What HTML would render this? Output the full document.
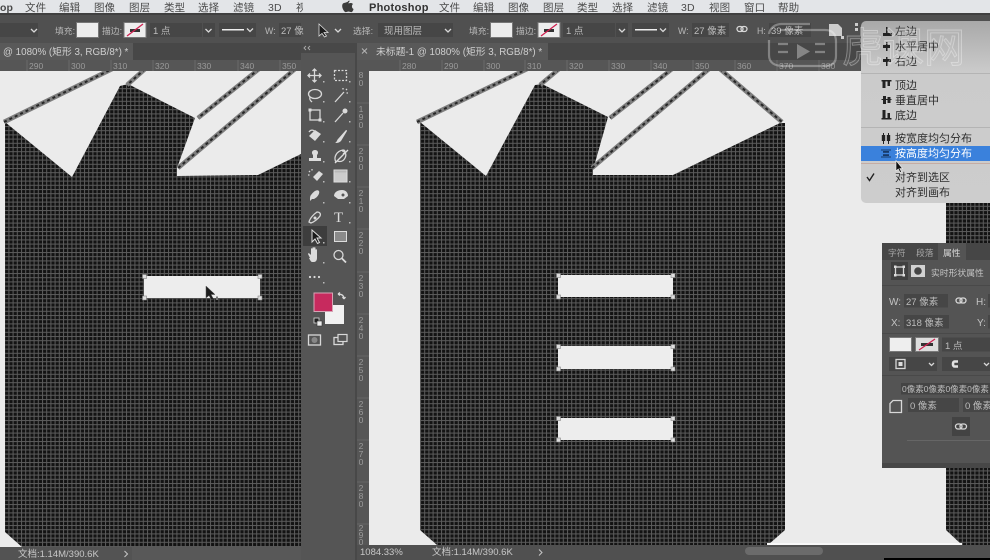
<!DOCTYPE html>
<html lang="zh"><head><meta charset="utf-8"><title>Photoshop</title>
<style>
html,body{margin:0;padding:0;background:#535353;width:990px;height:560px;overflow:hidden}
svg{display:block;filter:blur(.3px)}
text{font-family:"Liberation Sans","Noto Sans CJK SC",sans-serif}
.m{font-size:10.5px;fill:#4a4a4a;letter-spacing:.1px}
.o{font-size:8.800px;fill:#b8b8b8}
.v{font-size:9.500px;fill:#bdbdbd}
.t{font-size:9.800px;fill:#cfcfcf}
.r{font-size:8.5px;fill:#9a9a9a}
.s{font-size:9.5px;fill:#c8c8c8}
.d{font-size:11px;fill:#2e2e2e}
.p{font-size:8.800px;fill:#c4c4c4}
.box{fill:#464646}
.ic{fill:none;stroke:#d8d8d8;stroke-width:1.3}
.if{fill:#dcdcdc}
.ln{fill:none;stroke:#7e7e7e;stroke-width:4.6}
.ld{fill:none;stroke:#262626;stroke-width:2;stroke-dasharray:3 3}
</style></head><body>
<svg width="990" height="560" viewBox="0 0 990 560" xmlns="http://www.w3.org/2000/svg">
<defs>
<pattern id="g" patternUnits="userSpaceOnUse" width="4.2" height="4.2">
<rect width="4.2" height="4.2" fill="#131313"/>
<rect width="1" height="4.2" fill="#5c5c5c"/>
<rect width="4.2" height="1" fill="#5c5c5c"/>
</pattern>
<linearGradient id="mg" x1="0" y1="0" x2="0" y2="1"><stop offset="0" stop-color="#a9a9a9"/><stop offset=".28" stop-color="#cbcbcb"/><stop offset="1" stop-color="#cdcdcd"/></linearGradient>
</defs>

<rect width="990" height="560" fill="#535353"/>

<!-- left canvas -->
<rect x="0" y="71" width="301" height="476" fill="#ebebeb"/>
<polygon fill="url(#g)" points="5,122 72,177 120,86 128,84 195,118 177,168 177,176 258,175 301,154 301,547 22,547 5,532"/>
<g>
<path class="ln" d="M4,122L112,69M145,69L127,85M259,69L198,118M295,69L178,168"/>
<path class="ld" d="M4,122L112,69M145,69L127,85M259,69L198,118M295,69L178,168"/>
</g>
<rect x="144" y="276" width="116" height="22" fill="#ededed"/>
<g fill="#ddd" stroke="#888" stroke-width=".6">
<rect x="142.500" y="274.500" width="4" height="4"/><rect x="258" y="274.500" width="4" height="4"/><rect x="142.500" y="296" width="4" height="4"/><rect x="258" y="296" width="4" height="4"/>
</g>
<path d="M206,286V298L209,295.500L211.500,300L213.500,299L211,294.500H215Z" fill="#1c1c1c" stroke="#555" stroke-width=".5"/>
<path d="M217,296.500V300" stroke="#777" stroke-width="2"/>

<!-- right canvas -->
<rect x="369" y="71" width="621" height="474" fill="#ebebeb"/>
<polygon fill="url(#g)" points="420,122 486,176 535,85 542,84 608,117 593,170 593,175 673,175 780,123 785,123 785,530 768,545 437,545 420,530"/>
<polygon fill="url(#g)" points="946,195 990,195 990,545 962,545 946,530"/>
<rect x="767" y="543" width="195" height="2" fill="#f8f8f8"/>
<g>
<path class="ln" d="M417,122L527,69M559,69L540,85M672,69L610,118M709,69L592,168M720,69L782,122"/>
<path class="ld" d="M417,122L527,69M559,69L540,85M672,69L610,118M709,69L592,168M720,69L782,122"/>
</g>
<g fill="#ededed">
<rect x="558" y="275" width="115" height="22"/><rect x="558" y="346" width="115" height="23"/><rect x="558" y="418" width="115" height="22"/>
</g>
<g fill="#ddd" stroke="#888" stroke-width=".6">
<rect x="556.500" y="273.500" width="4" height="4"/><rect x="671" y="273.500" width="4" height="4"/><rect x="556.500" y="295" width="4" height="4"/><rect x="671" y="295" width="4" height="4"/>
<rect x="556.500" y="344.500" width="4" height="4"/><rect x="671" y="344.500" width="4" height="4"/><rect x="556.500" y="367" width="4" height="4"/><rect x="671" y="367" width="4" height="4"/>
<rect x="556.500" y="416.500" width="4" height="4"/><rect x="671" y="416.500" width="4" height="4"/><rect x="556.500" y="438" width="4" height="4"/><rect x="671" y="438" width="4" height="4"/>
</g>

<!-- menu bar -->
<rect width="990" height="13" fill="#e3e5e8"/>
<g class="m">
<text x="0" y="11" class="m" style="font-weight:700">op</text>
<text x="25" y="11" class="m">文件</text><text x="59" y="11" class="m">编辑</text><text x="94" y="11" class="m">图像</text><text x="129" y="11" class="m">图层</text><text x="164" y="11" class="m">类型</text><text x="198" y="11" class="m">选择</text><text x="233" y="11" class="m">滤镜</text><text x="268" y="11" class="m">3D</text><text x="296" y="11" class="m">视</text>
<text x="369" y="11" class="m" style="font-weight:700;font-size:11px;fill:#333;letter-spacing:.25px">Photoshop</text>
<text x="439" y="11" class="m">文件</text><text x="473" y="11" class="m">编辑</text><text x="508" y="11" class="m">图像</text><text x="543" y="11" class="m">图层</text><text x="577" y="11" class="m">类型</text><text x="612" y="11" class="m">选择</text><text x="647" y="11" class="m">滤镜</text><text x="681" y="11" class="m">3D</text><text x="709" y="11" class="m">视图</text><text x="744" y="11" class="m">窗口</text><text x="778" y="11" class="m">帮助</text>
</g>
<rect x="303" y="0" width="38" height="13" fill="#e3e5e8"/>
<path d="M348,1.500C346,3 344,2.500 343,3.500C341.500,5 342,9 345,12C346.500,12.500 347,11.500 348.500,11.500C350,11.500 350.500,12.500 352,12C353,11 353.500,9.500 353.500,9C351.500,8 351.500,5 353,4C352,2.800 350,2.700 348.500,3.500C348.500,2.500 349,1.500 350,1C349,.5 348,1 348,1.500Z" fill="#3c3c3c"/>

<!-- options bar -->
<rect y="13" width="990" height="30" fill="#505050"/>
<rect y="13" width="990" height="2" fill="#404040"/>
<rect x="0" y="23" width="38" height="14" class="box"/>
<path d="M31,29l3,3l3,-3" class="ic" stroke-width="1"/>
<text x="55" y="34" class="o">填充:</text>
<rect x="76.500" y="22.500" width="22" height="15" fill="#ededed" stroke="#777"/>
<text x="102" y="34" class="o">描边:</text>
<rect x="124" y="22.500" width="22" height="15" fill="#ededed" stroke="#777"/>
<rect x="130" y="29" width="10" height="3" fill="#333"/><path d="M127,36L143,24" stroke="#d02050" stroke-width="1.300"/>
<rect x="150" y="23" width="52" height="14" class="box"/><text x="153" y="34" class="v">1 点</text>
<rect x="203" y="23" width="12" height="14" class="box"/><path d="M205.500,29l3,3l3,-3" class="ic" stroke-width="1"/>
<rect x="219" y="23" width="37" height="14" class="box"/><rect x="222" y="29" width="22" height="1.500" fill="#eee"/><path d="M247,28.500l3,3l3,-3" class="ic" stroke-width="1"/>
<text x="265" y="34" class="o">W:</text>
<rect x="279" y="23" width="22" height="14" class="box"/><text x="281" y="34" class="v">27 像</text>
<path d="M319,24V36L322,33.500L324.500,37L326.500,36L324,32.500H328Z" fill="#1e1e1e" stroke="#ddd" stroke-width=".8"/>
<path d="M335,29l3,3l3,-3" class="ic" stroke-width="1"/>
<text x="353" y="34" class="o">选择:</text>
<rect x="378" y="23" width="75" height="14" class="box"/><text x="384" y="34" class="v">现用图层</text><path d="M445,29l3,3l3,-3" class="ic" stroke-width="1"/>
<text x="469" y="34" class="o">填充:</text>
<rect x="490.500" y="22.500" width="22" height="15" fill="#ededed" stroke="#777"/>
<text x="516" y="34" class="o">描边:</text>
<rect x="538" y="22.500" width="22" height="15" fill="#ededed" stroke="#777"/>
<rect x="544" y="29" width="10" height="3" fill="#333"/><path d="M541,36L557,24" stroke="#d02050" stroke-width="1.300"/>
<rect x="563" y="23" width="52" height="14" class="box"/><text x="566" y="34" class="v">1 点</text>
<rect x="616" y="23" width="12" height="14" class="box"/><path d="M619,29l3,3l3,-3" class="ic" stroke-width="1"/>
<rect x="632" y="23" width="37" height="14" class="box"/><rect x="635" y="29" width="22" height="1.500" fill="#eee"/><path d="M660,28.500l3,3l3,-3" class="ic" stroke-width="1"/>
<text x="678" y="34" class="o">W:</text>
<rect x="692" y="23" width="37" height="14" class="box"/><text x="694" y="34" class="v">27 像素</text>
<rect x="737" y="26.500" width="6" height="5" rx="2.500" class="ic" stroke-width="1"/><rect x="741" y="26.500" width="6" height="5" rx="2.500" class="ic" stroke-width="1"/>
<text x="757" y="34" class="o">H:</text>
<rect x="769" y="23" width="42" height="14" class="box"/><text x="771" y="34" class="v">39 像素</text>
<path d="M829,24H838L842,28V36H829Z" fill="#ccc"/>
<g fill="#ccc"><rect x="855" y="23" width="3" height="3"/><rect x="855" y="28" width="3" height="3"/><rect x="841" y="36" width="3" height="3"/></g>

<!-- tab bars -->
<rect y="43" width="990" height="17" fill="#474747"/>
<rect x="0" y="43" width="133" height="17" fill="#595959"/>
<text x="3" y="55" class="t">@ 1080% (矩形 3, RGB/8*) *</text>
<rect x="357" y="43" width="191" height="17" fill="#595959"/>
<path d="M362,48.500l5,5M367,48.500l-5,5" stroke="#b5b5b5" stroke-width="1"/>
<text x="376" y="55" class="t">未标题-1 @ 1080% (矩形 3, RGB/8*) *</text>

<!-- horizontal rulers -->
<rect y="60" width="990" height="11" fill="#565656"/>
<g stroke="#6e6e6e" stroke-width=".8">
<path d="M27,60v11M69,60v11M111,60v11M153,60v11M195,60v11M238,60v11M280,60v11M400,60v11M442,60v11M484,60v11M525,60v11M567,60v11M609,60v11M651,60v11M693,60v11M735,60v11M777,60v11M819,60v11"/>
</g>
<g class="r">
<text x="29" y="69" class="r">290</text><text x="71" y="69" class="r">300</text><text x="113" y="69" class="r">310</text><text x="155" y="69" class="r">320</text><text x="197" y="69" class="r">330</text><text x="240" y="69" class="r">340</text><text x="282" y="69" class="r">350</text>
<text x="402" y="69" class="r">280</text><text x="444" y="69" class="r">290</text><text x="486" y="69" class="r">300</text><text x="527" y="69" class="r">310</text><text x="569" y="69" class="r">320</text><text x="611" y="69" class="r">330</text><text x="653" y="69" class="r">340</text><text x="695" y="69" class="r">350</text><text x="737" y="69" class="r">360</text><text x="779" y="69" class="r">370</text><text x="821" y="69" class="r">380</text>
</g>

<!-- vertical ruler -->
<rect x="357" y="60" width="12" height="487" fill="#565656"/>
<g stroke="#6e6e6e" stroke-width=".8"><path d="M357,103h12M357,145h12M357,187h12M357,229h12M357,272h12M357,314h12M357,356h12M357,398h12M357,440h12M357,482h12M357,524h12"/></g>
<g class="r" text-anchor="middle">
<text x="361" y="78" class="r" text-anchor="middle">8</text><text x="361" y="86" class="r" text-anchor="middle">0</text>
<text x="361" y="112" class="r" text-anchor="middle">1</text><text x="361" y="120" class="r" text-anchor="middle">9</text><text x="361" y="128" class="r" text-anchor="middle">0</text>
<text x="361" y="154" class="r" text-anchor="middle">2</text><text x="361" y="162" class="r" text-anchor="middle">0</text><text x="361" y="170" class="r" text-anchor="middle">0</text>
<text x="361" y="196" class="r" text-anchor="middle">2</text><text x="361" y="204" class="r" text-anchor="middle">1</text><text x="361" y="212" class="r" text-anchor="middle">0</text>
<text x="361" y="238" class="r" text-anchor="middle">2</text><text x="361" y="246" class="r" text-anchor="middle">2</text><text x="361" y="254" class="r" text-anchor="middle">0</text>
<text x="361" y="281" class="r" text-anchor="middle">2</text><text x="361" y="289" class="r" text-anchor="middle">3</text><text x="361" y="297" class="r" text-anchor="middle">0</text>
<text x="361" y="323" class="r" text-anchor="middle">2</text><text x="361" y="331" class="r" text-anchor="middle">4</text><text x="361" y="339" class="r" text-anchor="middle">0</text>
<text x="361" y="365" class="r" text-anchor="middle">2</text><text x="361" y="373" class="r" text-anchor="middle">5</text><text x="361" y="381" class="r" text-anchor="middle">0</text>
<text x="361" y="407" class="r" text-anchor="middle">2</text><text x="361" y="415" class="r" text-anchor="middle">6</text><text x="361" y="423" class="r" text-anchor="middle">0</text>
<text x="361" y="449" class="r" text-anchor="middle">2</text><text x="361" y="457" class="r" text-anchor="middle">7</text><text x="361" y="465" class="r" text-anchor="middle">0</text>
<text x="361" y="491" class="r" text-anchor="middle">2</text><text x="361" y="499" class="r" text-anchor="middle">8</text><text x="361" y="507" class="r" text-anchor="middle">0</text>
<text x="361" y="531" class="r" text-anchor="middle">2</text><text x="361" y="538" class="r" text-anchor="middle">9</text><text x="361" y="545" class="r" text-anchor="middle">0</text>
</g>

<!-- toolbar -->
<rect x="301" y="43" width="56" height="517" fill="#484848"/>
<rect x="301" y="53" width="54" height="507" fill="#555"/>
<path d="M306,46l-2,2l2,2M310,46l-2,2l2,2" fill="none" stroke="#aaa" stroke-width=".9"/>
<rect x="303" y="226" width="24" height="20" fill="#3d3d3d"/>
<!-- row 1 -->
<path class="ic" d="M314.500,69v13M308,75.500h13M312.500,71l2,-2l2,2M312.500,80l2,2l2,-2M310,73.500l-2,2l2,2M319,73.500l2,2l-2,2"/>
<rect x="334.500" y="70.500" width="12" height="10" class="ic" stroke-dasharray="2 1.500"/>
<!-- row 2 -->
<ellipse cx="315" cy="94" rx="6.500" ry="4.500" class="ic"/><path class="ic" d="M310,97c-1,3 1,4 2,5"/>
<path class="ic" d="M335,102L344,92" stroke-width="2.400"/><path class="ic" d="M346,89l1,1M343,88v1.500M348,93h-1.500" stroke-width="1"/>
<!-- row 3 -->
<rect x="310" y="110" width="10" height="10" class="ic"/><rect x="308.500" y="108.500" width="3" height="3" class="if"/><rect x="318.500" y="118.500" width="3" height="3" class="if"/>
<path class="ic" d="M335,122L343,113" stroke-width="2.200"/><circle cx="345" cy="111" r="2.500" class="if"/>
<!-- row 4 -->
<path d="M309,136l6,-6l6,4l-6,7z" class="if"/><path d="M309,132c2,-3 5,-2 6,0" class="ic"/>
<path d="M335,143c2,-1 2,-3 3,-4l8,-9c1,0 1,1 1,1l-6,10c-2,2 -4,2 -6,2z" class="if"/>
<!-- row 5 -->
<path d="M309,161h12v-3h-4v-3c2,-2 1,-5 -2,-5s-4,3 -2,5v3h-4z" class="if"/>
<path class="ic" d="M336,162c-3,-5 1,-11 7,-12c3,0 2,3 0,4M342,151c3,0 5,3 3,7c-2,4 -5,4 -8,3"/><path d="M335,163L348,150" stroke="#ddd" stroke-width="1.300"/>
<!-- row 6 -->
<path d="M313,177l6,-6l4,3l-6,7z" class="if"/><path class="ic" d="M309,171l1,1M312,169v1.500M308,175h1.500" stroke-width="1"/>
<rect x="334" y="170" width="13" height="12" fill="url(#mg)" stroke="#ddd" stroke-width="1"/>
<!-- row 7 -->
<path d="M310,201c0,-3 0,-5 1,-6c3,-4 6,-6 8,-4c1,2 -1,6 -5,8l-2,0z" class="if"/>
<path d="M334,196c0,-4 4,-6 8,-6s6,3 6,6l-4,3h-6z" class="if"/><circle cx="343" cy="195" r="1.500" fill="#555"/>
<!-- row 8 -->
<path class="ic" d="M309,222c1,-4 5,-8 8,-10c3,0 4,2 3,4c-2,3 -6,6 -9,7z"/><circle cx="315" cy="218" r="1.500" class="if"/>
<text x="334" y="222" style="font-family:'Liberation Serif',serif;font-size:15px;fill:#dcdcdc">T</text>
<!-- row 9 -->
<path d="M312,230V242L315,239L317.500,243.500L319.500,242.500L317,238H321Z" fill="#1a1a1a" stroke="#ddd" stroke-width="1"/>
<rect x="334.500" y="231.500" width="12" height="10" fill="#8a8a8a" stroke="#ddd"/>
<!-- row 10 -->
<path d="M310,258l-2,-4c0,-1 1,-1 2,0l1,1v-6c0,-1 1.500,-1 1.500,0v4v-5c0,-1 1.500,-1 1.500,0v5v-5c0,-1 1.500,-1 1.500,0v5v-3c0,-1 1.500,-1 1.500,0v8c0,2 -1,4 -3,4h-2c-1,0 -2,-2 -3,-4z" class="if"/>
<circle cx="338.500" cy="255" r="4.500" class="ic"/><path d="M342,258.500l4,4" stroke="#ddd" stroke-width="1.800"/>
<!-- row 11 -->
<circle cx="310" cy="277" r="1.100" class="if"/><circle cx="314.500" cy="277" r="1.100" class="if"/><circle cx="319" cy="277" r="1.100" class="if"/>
<!-- small triangles -->
<g fill="#bbb"><rect x="323" y="81" width="1.500" height="1.500"/><rect x="349" y="81" width="1.500" height="1.500"/><rect x="323" y="101" width="1.500" height="1.500"/><rect x="349" y="101" width="1.500" height="1.500"/><rect x="323" y="121" width="1.500" height="1.500"/><rect x="349" y="121" width="1.500" height="1.500"/><rect x="323" y="141" width="1.500" height="1.500"/><rect x="349" y="141" width="1.500" height="1.500"/><rect x="323" y="161" width="1.500" height="1.500"/><rect x="349" y="161" width="1.500" height="1.500"/><rect x="323" y="181" width="1.500" height="1.500"/><rect x="349" y="181" width="1.500" height="1.500"/><rect x="323" y="202" width="1.500" height="1.500"/><rect x="349" y="202" width="1.500" height="1.500"/><rect x="323" y="242" width="1.500" height="1.500"/><rect x="349" y="222" width="1.500" height="1.500"/><rect x="323" y="262" width="1.500" height="1.500"/><rect x="323" y="282" width="1.500" height="1.500"/></g>
<!-- colours -->
<rect x="325" y="305" width="19" height="19" fill="#f1f1f1"/>
<rect x="314" y="293" width="18.500" height="18.500" fill="#c72a5e" stroke="#d6a5b5" stroke-width="1"/>
<path class="ic" d="M338,294c3,0 6,1 6,5M338,294l2,-1.500M338,294l2,1.500M344,299l-1.500,-2M344,299l1.500,-2" stroke-width="1.100"/>
<rect x="314" y="318" width="5" height="5" fill="#222" stroke="#ddd" stroke-width=".8"/><rect x="317" y="321" width="5" height="5" fill="#eee" stroke="#333" stroke-width=".6"/>
<!-- bottom icons -->
<rect x="308.500" y="335" width="12" height="10" class="ic"/><circle cx="314.500" cy="340" r="3" fill="#888"/>
<rect x="334" y="337.500" width="9" height="7" class="ic"/><rect x="338" y="334.500" width="9" height="7" fill="#555" stroke="#d8d8d8" stroke-width="1.200"/>

<!-- status bars -->
<rect x="0" y="547" width="301" height="13" fill="#535353"/>
<rect x="132" y="547" width="169" height="13" fill="#585858"/>
<text x="18" y="557" class="s">文档:1.14M/390.6K</text>
<path d="M124.500,551l3,3l-3,3" fill="none" stroke="#c8c8c8"/>
<rect x="357" y="545" width="633" height="15" fill="#505050"/>
<text x="360" y="555" class="s">1084.33%</text>
<text x="432" y="555" class="s">文档:1.14M/390.6K</text>
<path d="M539,549.500l3,3l-3,3" fill="none" stroke="#c8c8c8"/>
<rect x="745" y="547" width="78" height="8" rx="4" fill="#6b6b6b"/>
<rect x="884" y="558" width="106" height="2" fill="#000"/>

<!-- properties panel -->
<rect x="882" y="243" width="108" height="225" fill="#545454"/>
<rect x="882" y="243" width="108" height="17" fill="#464646"/>
<rect x="938" y="243" width="28" height="17" fill="#545454"/>
<rect x="882" y="463" width="108" height="5" fill="#474747"/>
<text x="888" y="256" class="p" style="fill:#a5a5a5">字符</text>
<text x="916" y="256" class="p" style="fill:#a5a5a5">段落</text>
<text x="943" y="256" class="p" style="fill:#dadada">属性</text>
<rect x="891" y="262" width="17" height="18" fill="#404040"/>
<rect x="895.500" y="267" width="8" height="8" class="ic" stroke-width="1"/>
<rect x="894" y="265.500" width="2.500" height="2.500" class="if"/><rect x="902.500" y="265.500" width="2.500" height="2.500" class="if"/><rect x="894" y="274" width="2.500" height="2.500" class="if"/><rect x="902.500" y="274" width="2.500" height="2.500" class="if"/>
<rect x="911" y="265" width="14" height="12" fill="#d2d2d2"/><circle cx="918" cy="271" r="3.800" fill="#454545"/>
<text x="931" y="276" class="p">实时形状属性</text>
<rect x="882" y="285" width="108" height="1" fill="#494949"/>
<text x="889" y="305" class="p" style="font-size:10px">W:</text>
<rect x="904" y="294" width="44" height="13.500" class="box"/><text x="906" y="305" class="v">27 像素</text>
<rect x="956" y="298" width="6" height="5" rx="2.500" class="ic" stroke-width="1"/><rect x="960" y="298" width="6" height="5" rx="2.500" class="ic" stroke-width="1"/>
<text x="976" y="305" class="p" style="font-size:10px">H:</text>
<rect x="988" y="294" width="2" height="13.500" class="box"/>
<text x="891" y="326" class="p" style="font-size:10px">X:</text>
<rect x="904" y="315" width="45" height="13.500" class="box"/><text x="906" y="326" class="v">318 像素</text>
<text x="977" y="326" class="p" style="font-size:10px">Y:</text>
<rect x="988" y="315" width="2" height="13.500" class="box"/>
<rect x="882" y="333" width="108" height="1" fill="#494949"/>
<rect x="889.500" y="337.500" width="22" height="14" fill="#eee" stroke="#7a7a7a"/>
<rect x="915.500" y="337.500" width="23" height="14" fill="#ddd" stroke="#7a7a7a"/>
<rect x="921" y="343" width="12" height="3" fill="#333"/><path d="M919,350L935,339" stroke="#d02050" stroke-width="1.200"/>
<rect x="942" y="337.500" width="48" height="14" class="box"/><text x="945" y="349" class="v">1 点</text>
<rect x="889" y="357" width="48" height="14" class="box"/>
<rect x="896" y="359.500" width="9" height="9" class="ic" stroke-width="1"/><rect x="898.500" y="362" width="4" height="4" class="if"/>
<path d="M929,363l2.500,2.500l2.500,-2.500" class="ic" stroke-width="1"/>
<rect x="942" y="357" width="48" height="14" class="box"/>
<path d="M958,361.500h-3.500c-2,0 -2,5 0,5h3.500" fill="none" stroke="#e2e2e2" stroke-width="2.600"/>
<path d="M984,363l2.500,2.500l2.500,-2.500" class="ic" stroke-width="1"/>
<rect x="882" y="375" width="108" height="1" fill="#494949"/>
<rect x="901" y="383" width="89" height="11.500" fill="#444"/>
<text x="902" y="392" class="v" style="font-size:8.500px">0像素0像素0像素0像素</text>
<path d="M893,400.500h8.500v12h-11.500v-9z" class="ic" stroke-width="1"/>
<rect x="908" y="398" width="51" height="14" class="box"/><text x="910" y="409" class="v">0 像素</text>
<rect x="963" y="398" width="27" height="14" class="box"/><text x="965" y="409" class="v">0 像素</text>
<rect x="952" y="417" width="18" height="19" fill="#434343"/>
<rect x="955.500" y="424" width="6.500" height="5" rx="2.500" class="ic" stroke-width="1"/><rect x="960" y="424" width="6.500" height="5" rx="2.500" class="ic" stroke-width="1"/>
<rect x="907" y="440" width="83" height="1" fill="#666"/>

<!-- dropdown menu -->
<path d="M866,21H990V203H866a5,5 0 0 1 -5,-5V26a5,5 0 0 1 5,-5z" fill="url(#mg)"/>
<rect x="861" y="73" width="129" height="1" fill="#b4b4b4"/>
<rect x="861" y="127" width="129" height="1" fill="#b4b4b4"/>
<rect x="861" y="163" width="129" height="1" fill="#c4aca4"/>
<rect x="861" y="146" width="129" height="15" fill="#3a81dc"/>
<g class="d">
<text x="895" y="35" class="d">左边</text><text x="895" y="50" class="d">水平居中</text><text x="895" y="65" class="d">右边</text>
<text x="895" y="89" class="d">顶边</text><text x="895" y="104" class="d">垂直居中</text><text x="895" y="119" class="d">底边</text>
<text x="895" y="142" class="d">按宽度均匀分布</text>
<text x="895" y="157" class="d" style="fill:#fff">按高度均匀分布</text>
<text x="895" y="181" class="d">对齐到选区</text><text x="895" y="196" class="d">对齐到画布</text>
</g>
<g fill="#222">
<rect x="886" y="27" width="1.500" height="9"/><rect x="883" y="33" width="9" height="3"/>
<rect x="886" y="42" width="1.500" height="9"/><rect x="883" y="45" width="7" height="3"/>
<rect x="886" y="57" width="1.500" height="9"/><rect x="883" y="59" width="8" height="3"/>
<rect x="881.500" y="80" width="10" height="1.500"/><rect x="882.500" y="81" width="3" height="7"/><rect x="887.500" y="81" width="2.500" height="5"/>
<rect x="881.500" y="99" width="10" height="1"/><rect x="883" y="96" width="3" height="8"/><rect x="887.500" y="97" width="3" height="6"/>
<rect x="881.500" y="118" width="10" height="1.500"/><rect x="882.500" y="110" width="3" height="8"/><rect x="887.500" y="113" width="2.500" height="5"/>
<rect x="883" y="133" width="1" height="11"/><rect x="881.800" y="135" width="3.400" height="6"/><rect x="888" y="133" width="1" height="11"/><rect x="886.800" y="135" width="3.400" height="6"/>
</g>
<g fill="#173a6a"><rect x="881" y="149.500" width="10" height="1"/><rect x="881" y="156.500" width="10" height="1"/><rect x="883" y="151" width="6" height="1.800"/><rect x="883" y="154.200" width="6" height="1.800"/></g>
<path d="M867,177l2.500,3.500l4.500,-7" fill="none" stroke="#222" stroke-width="1.400"/>
<path d="M896,160.500V171L898.300,169L900,172.500L901.500,171.800L899.800,168.500H902.500Z" fill="#111" stroke="#eee" stroke-width=".6"/>

<!-- watermark -->
<g fill="none" stroke="#fff" stroke-opacity=".32" stroke-width="2.200">
<path d="M780,30H825C833,30 836,34 836,42V56C836,63 832,66 825,66H783C775,66 769,63 769,55V40"/>
<path d="M769,34C770,28 775,24 782,24H810"/>
<path d="M778,44H788M778,52H788M825,44H815M825,52H815"/>
</g>
<polygon points="797,44 797,59 810,51.500" fill="#fff" fill-opacity=".34"/>
<text x="842" y="62" style="font-size:41px;fill:#fff;fill-opacity:.06;stroke:#fff;stroke-opacity:.34;stroke-width:.9">虎课网</text>
</svg>
</body></html>
